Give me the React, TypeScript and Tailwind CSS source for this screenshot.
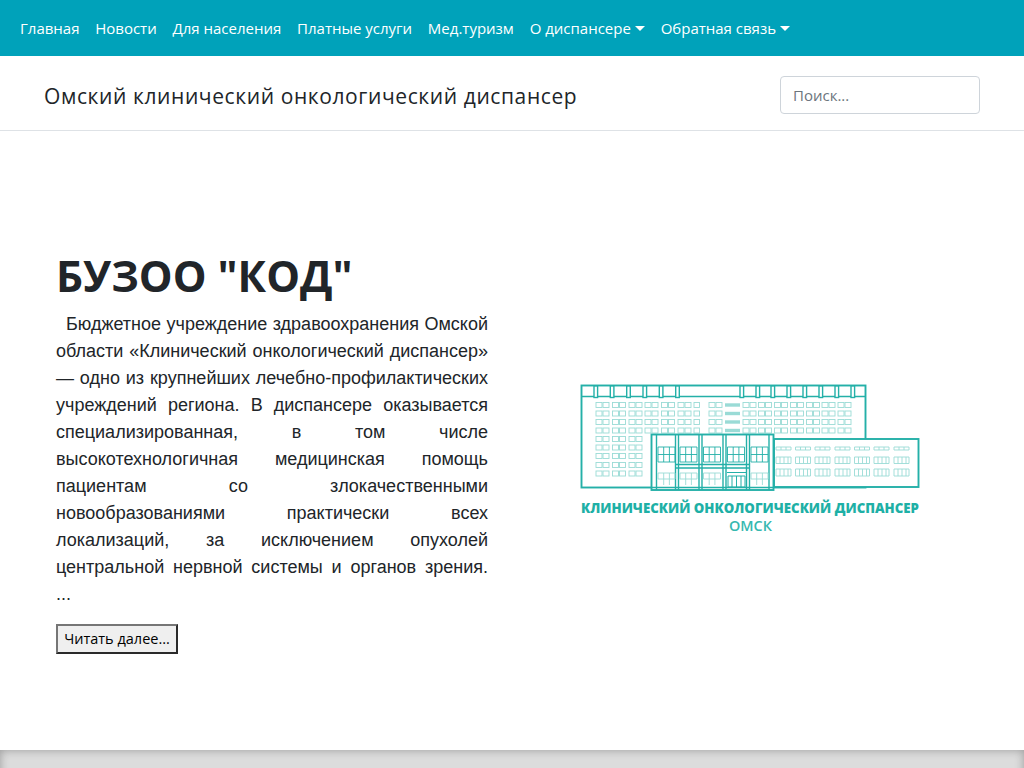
import React from "react";

const C = "#24b0a8";
const L = "#9adbd6";

function Pair({ x, y }: { x: number; y: number }) {
  return (
    <g fill="none" stroke={L} strokeWidth={0.9}>
      <rect x={x} y={y} width={6} height={5} />
      <rect x={x + 7} y={y} width={6} height={5} />
    </g>
  );
}

function Logo() {
  const rows = [402.5, 411, 419.5, 428, 436.5, 445, 453.5, 462.5, 471];
  const leftCols = [596, 612.5, 629, 645, 661.5, 678];
  const rightCols = [743, 758.5, 774.5, 790.5, 806.5, 822, 838];
  const posts = [594, 610.3, 626.7, 643, 659.3, 675.7, 740, 756, 771, 787, 803, 819, 835, 851];
  const wing = [776, 795.5, 815, 835, 854.5, 874, 894];
  const upper = [658, 680, 703.5, 727.5, 751];
  return (
    <svg width={360} height={165} viewBox="570 375 360 165" className="block overflow-visible">
      {rows.map((y, r) =>
        leftCols.map((x) => (r > 3 && x > 640 ? null : <Pair key={`${x}-${y}`} x={x} y={y} />)),
      )}
      {rows.slice(0, 4).map((y) => (
        <g key={y}>
          <rect x={694} y={y} width={5.5} height={5} fill="none" stroke={L} strokeWidth={0.9} />
          <Pair x={709} y={y} />
          <rect x={725} y={y + 0.8} width={15} height={3.4} fill={L} />
          {rightCols.map((x) => (
            <Pair key={x} x={x} y={y} />
          ))}
        </g>
      ))}
      <g fill="none" stroke={C} strokeWidth={1.9}>
        <rect x={581.5} y={385.5} width={284} height={102} />
      </g>
      <path d="M581 396.5H865" stroke={C} strokeWidth={1.4} />
      {posts.map((x) => (
        <rect key={x} x={x} y={386} width={3.6} height={11.5} fill="#fff" stroke={C} strokeWidth={1.4} />
      ))}

      <rect x={774} y={439} width={144.5} height={48} fill="#fff" stroke={C} strokeWidth={1.9} />
      {wing.map((x) => (
        <g key={x} fill="none" stroke={L} strokeWidth={0.9}>
          <path d={`M${x} 447h15v3h-15zM${x + 5} 447v3M${x + 10} 447v3`} />
          <path d={`M${x} 457h15v6.5h-15zM${x + 4} 457v6.5M${x + 8} 457v6.5M${x + 12} 457v6.5`} />
          <path d={`M${x} 469h15v7h-15zM${x + 4} 469v7M${x + 8} 469v7M${x + 12} 469v7`} />
        </g>
      ))}

      <rect x={651.5} y={434.5} width={122} height={55.5} fill="#fff" stroke={C} strokeWidth={1.9} />
      <g fill="none" stroke={C} strokeWidth={1.4}>
        <path d="M656.5 435V490M675.5 435V490M678.5 435V490M699 435V490M702 435V490M723 435V490M726 435V490M746.5 435V490M749.5 435V490M769 435V490" />
        <path d="M675.5 464.5H749.5M675.5 468H749.5" />
        <path d="M651 487.5H774" />
      </g>
      <g fill="none" stroke={C} strokeWidth={0.9}>
        {upper.map((x) => (
          <path key={x} d={`M${x} 447h17v15h-17zM${x + 5.7} 447v15M${x + 11.4} 447v15M${x} 454.5h17`} />
        ))}
      </g>
      <g fill="none" stroke={L} strokeWidth={0.9}>
        {[658, 680, 703.5, 751].map((x) => (
          <path key={x} d={`M${x} 473h17v6h-17zM${x + 5.7} 473v12M${x + 11.4} 473v12`} />
        ))}
      </g>
      <g fill="none" stroke={C} strokeWidth={1}>
        <path d="M727 472.5H746M728 476H745V487H728ZM732 476V487M736.5 476V487M741 476V487" />
      </g>
      <text
        x={581}
        y={512.5}
        textLength={338}
        lengthAdjust="spacingAndGlyphs"
        fontFamily="'Open Sans', sans-serif"
        fontWeight={800}
        fontSize={14}
        fill="#1eb0a6"
      >
        КЛИНИЧЕСКИЙ ОНКОЛОГИЧЕСКИЙ ДИСПАНСЕР
      </text>
      <text
        x={729}
        y={530.5}
        textLength={43}
        lengthAdjust="spacingAndGlyphs"
        fontFamily="'Open Sans', sans-serif"
        fontWeight={600}
        fontSize={14}
        fill="#36b8af"
      >
        ОМСК
      </text>
    </svg>
  );
}

function Caret() {
  return <span className="ml-[4px] inline-block align-[3px] border-t-[5px] border-x-[5px] border-b-0 border-t-white border-x-transparent" />;
}

const items: [string, boolean][] = [
  ["Главная", false],
  ["Новости", false],
  ["Для населения", false],
  ["Платные услуги", false],
  ["Мед.туризм", false],
  ["О диспансере", true],
  ["Обратная связь", true],
];

export default function App() {
  return (
    <div className="h-[768px] overflow-hidden flex flex-col bg-white font-['Open_Sans',sans-serif] text-[#212529]">
      <nav className="h-14 shrink-0 bg-[#00a2ba] px-5 flex items-center gap-[15.75px] text-white text-[15px]">
        {items.map(([t, c]) => (
          <a key={t} className="whitespace-nowrap">
            {t}
            {c && <Caret />}
          </a>
        ))}
      </nav>
      <header className="h-[75px] shrink-0 border-b border-[#dee2e6] pl-11 pr-11 flex items-center justify-between">
        <h2 className="text-[21px] tracking-[0.6px] leading-none mt-[7px]">Омский клинический онкологический диспансер</h2>
        <input
          placeholder="Поиск..."
          className="w-[200px] h-[38px] border border-[#ced4da] rounded-[4px] px-3 text-[15px] placeholder:text-[#6c757d] mt-[4px]"
        />
      </header>
      <main className="h-[619px] shrink-0 flex">
        <section className="w-[488px] shrink-0 pl-14 pt-[116px]">
          <h1 className="text-[42.5px] font-bold leading-[58px] mb-[6px]">БУЗОО "КОД"</h1>
          <p className="font-['Liberation_Sans',sans-serif] text-[18px] leading-[27px] text-justify indent-[10px] text-[#212529]">
            Бюджетное учреждение здравоохранения Омской области «Клинический онкологический диспансер» — одно из крупнейших лечебно-профилактических учреждений региона. В диспансере оказывается специализированная, в том числе высокотехнологичная медицинская помощь пациентам со злокачественными новообразованиями практически всех локализаций, за исключением опухолей центральной нервной системы и органов зрения. ...
          </p>
          <button className="mt-4 w-[122px] h-[30px] pt-[1px] bg-[#efefef] border-2 border-solid border-t-[#767676] border-l-[#767676] border-r-[#2a2a2a] border-b-[#2a2a2a] text-[14.5px] text-black leading-none">
            Читать далее...
          </button>
        </section>
        <section className="flex-1 pl-[82px] pt-[244px]">
          <Logo />
        </section>
      </main>
      <footer className="h-[60px] shrink-0 bg-[#dcdcdc] shadow-[inset_0_0_10px_rgba(0,0,0,0.3)]" />
    </div>
  );
}
